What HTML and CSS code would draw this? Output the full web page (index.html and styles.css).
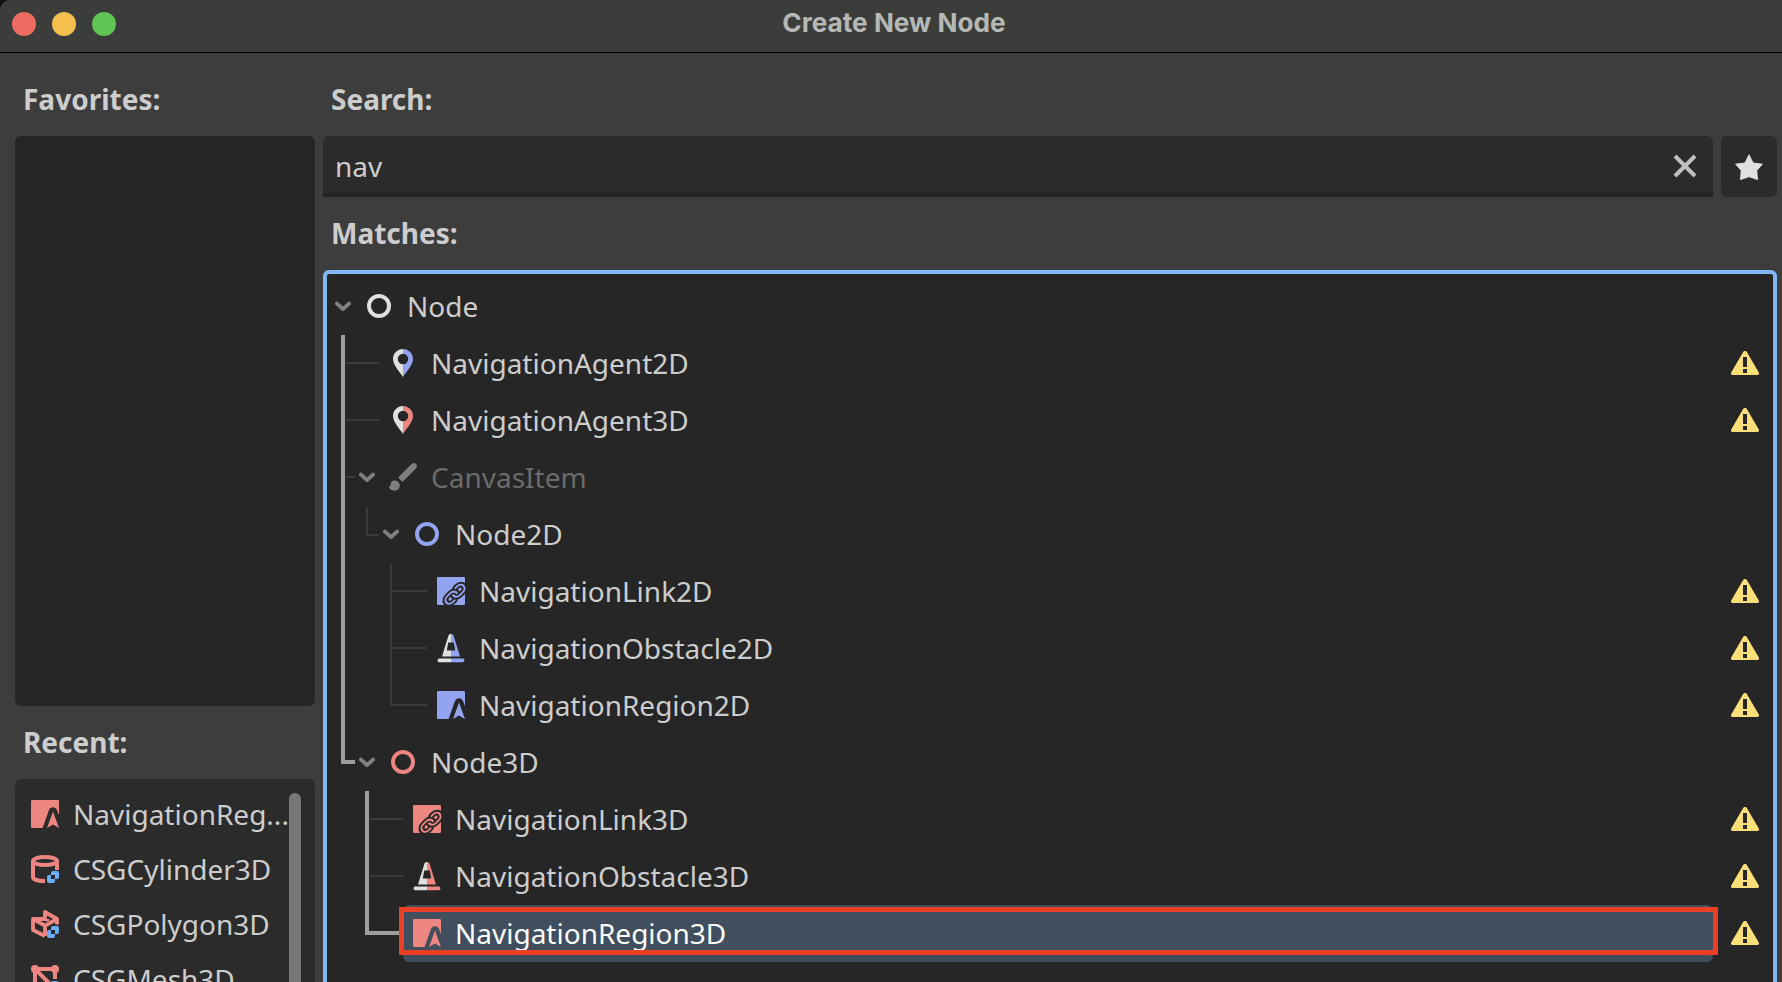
FILE: index.html
```html
<!DOCTYPE html>
<html lang="en">
<head>
<meta charset="utf-8">
<title>Create New Node</title>
<link rel="stylesheet" href="styles.css">
</head>
<body>
<svg class="sprites" aria-hidden="true">
  <symbol id="ring" viewBox="0 0 16 16"><circle cx="8" cy="8" r="5" fill="none" stroke="currentColor" stroke-width="2"/></symbol>
  <symbol id="pin" viewBox="0 0 16 16">
    <path fill="#e0e0e0" d="M8 1C5.200 1 3 3.200 3 6c0 3 3.500 6.500 5 9V8.600a2.600 2.600 0 0 1 0-5.200z"/>
    <path fill="currentColor" d="M8 1c2.800 0 5 2.200 5 5 0 3-3.500 6.500-5 9V8.600a2.600 2.600 0 0 0 0-5.200z"/>
  </symbol>
  <symbol id="brush" viewBox="0 0 16 16">
    <path fill="currentColor" d="M14.500 1.500c-.6-.6-1.500-.7-2.200 0L5.900 7.900c-.2.200-.2.500 0 .7l1.500 1.500c.2.200.5.200.7 0l6.400-6.400c.7-.7.600-1.600 0-2.200zM3.800 9.700c-1.500 0-2 1-2 2.300 0 .5-.4.700-.8.600 0 1.300 1.300 2.200 2.700 2.200 1.600 0 2.700-1.100 2.700-2.600 0-1.400-1.100-2.500-2.600-2.500z"/>
  </symbol>
  <symbol id="link" viewBox="0 0 16 16">
    <rect x="1" y="1" width="14" height="14" rx=".6" fill="currentColor"/>
    <g transform="translate(10 9.600) rotate(-45) scale(.5 .41) rotate(45) translate(-12 -12)" fill="none" stroke-linecap="round">
      <g stroke="#262626" stroke-width="6.600"><path id="chain-a" d="M10 13a5 5 0 0 0 7.540.54l3-3a5 5 0 0 0-7.070-7.070l-1.720 1.710"/><path id="chain-b" d="M14 11a5 5 0 0 0-7.540-.54l-3 3a5 5 0 0 0 7.070 7.070l1.710-1.710"/></g>
      <g stroke="currentColor" stroke-width="2.200"><use href="#chain-a"/><use href="#chain-b"/></g>
    </g>
  </symbol>
  <symbol id="cone" viewBox="0 0 16 16">
    <path fill="#e0e0e0" d="M8 1c-.7 0-1.100.3-1.300.9L3.500 12.200H8v-3H5.900l.7-4H8zM2.200 13.200a.95.95 0 0 0 0 1.900H8v-1.900z"/>
    <path fill="currentColor" d="M8 1c.7 0 1.100.3 1.300.9l3.200 10.300H8v-3h2.100l-.7-4H8zM13.800 13.200a.95.95 0 0 1 0 1.900H8v-1.900z"/>
  </symbol>
  <symbol id="region" viewBox="0 0 16 16">
    <path fill="currentColor" d="M1.600 1h12.800a.6.600 0 0 1 .6.600v7L14 6c-.7-1.800-3.300-1.800-4 0L6.800 15H1.600a.6.600 0 0 1-.6-.6V1.600a.6.600 0 0 1 .6-.6zM12 6.800 15 15l-3-1.700L9 15z"/>
  </symbol>
  <symbol id="csg" viewBox="0 0 16 16">
    <path fill="#6cacff" d="M12 9a1 1 0 0 0-1 1v1h2v2h1a1 1 0 0 0 1-1v-2a1 1 0 0 0-1-1zM11 11h-1a1 1 0 0 0-1 1v2a1 1 0 0 0 1 1h2a1 1 0 0 0 1-1v-1h-2z"/>
  </symbol>
  <symbol id="cylinder" viewBox="0 0 16 16">
    <g fill="none" stroke="currentColor" stroke-width="2"><ellipse cx="8" cy="4" rx="6" ry="2"/><path d="M14 4v4.500M2 4v8c0 1.200 2.700 2 6 2"/></g>
    <use href="#csg"/>
  </symbol>
  <symbol id="polygon" viewBox="0 0 16 16">
    <path fill="none" stroke="currentColor" stroke-width="1.900" stroke-linejoin="round" d="M8 14 2 11V5.500h6V2l6 3.500v2.800M2 5.500l6 3.300 6-3.300M8 8.800V14"/>
    <path fill="currentColor" d="M7.100 5 10.500 5.800 9.500 6.900 7.100 6.300z"/>
    <use href="#csg"/>
  </symbol>
  <symbol id="mesh" viewBox="0 0 16 16">
    <g stroke="currentColor" stroke-width="2" fill="none"><path d="M3 3h10v5M3 3v10h5M3 3l10 10"/></g>
    <g fill="currentColor"><circle cx="3" cy="3" r="2"/><circle cx="13" cy="3" r="2"/><circle cx="3" cy="13" r="2"/></g>
    <use href="#csg"/>
  </symbol>
  <symbol id="warning" viewBox="0 0 16 16">
    <path fill="#fcdf79" fill-rule="evenodd" d="M8 2c-.5 0-.8.2-1 .6L1.100 12.800c-.3.600 0 1.200.7 1.200h12.400c.7 0 1-.6.700-1.200L9 2.600C8.800 2.200 8.500 2 8 2zM7 5h2v5H7zM7 11h2v2H7z"/>
  </symbol>
  <symbol id="chevron" viewBox="0 0 16 16"><path d="M2 4.600l6 5.500 6-5.500" fill="none" stroke="#808080" stroke-width="4" stroke-linecap="round" stroke-linejoin="round"/></symbol>
</svg>

<div class="window">
  <header class="titlebar">
    <div class="lights"><i class="light red"></i><i class="light yellow"></i><i class="light green"></i></div>
    <h1 class="title">Create New Node</h1>
  </header>
  <main class="content">
    <aside class="sidebar">
      <h2 class="label">Favorites:</h2>
      <div class="favorites"></div>
      <h2 class="label recent-label">Recent:</h2>
      <div class="recent">
        <ul class="recent-list">
          <li class="recent-item three-d"><svg class="icon"><use href="#region"/></svg><span>NavigationReg...</span></li>
          <li class="recent-item three-d"><svg class="icon"><use href="#cylinder"/></svg><span>CSGCylinder3D</span></li>
          <li class="recent-item three-d"><svg class="icon"><use href="#polygon"/></svg><span>CSGPolygon3D</span></li>
          <li class="recent-item three-d"><svg class="icon"><use href="#mesh"/></svg><span>CSGMesh3D</span></li>
        </ul>
        <div class="scrollbar"></div>
      </div>
    </aside>
    <section class="results">
      <h2 class="label">Search:</h2>
      <div class="search-row">
        <div class="search"><span>nav</span><svg class="clear" viewBox="0 0 24 24"><path d="M2 2l20 20M22 2 2 22" stroke="#c0c0c0" stroke-width="4" fill="none"/></svg></div>
        <button class="favorite"><svg class="star" viewBox="0 0 28 26"><path fill="#e0e0e0" stroke="#e0e0e0" stroke-linejoin="round" d="M14 .8l4 8.200 9.300 1.200-5.500 6.200.6 9.100-8.400-2.900-8.400 2.900.6-9.100L.7 10.200 10 9z"/></svg></button>
      </div>
      <h2 class="label matches-label">Matches:</h2>
      <div class="tree">
        <svg class="guides" viewBox="0 0 120 712" fill="none">
          <g stroke="#3b3b3b" stroke-width="2"><path d="M19 89h33M19 146h33M19 203h9M40 233v28h12M64 290v141h36M64 317h36M64 374h36M43 545h33M43 602h33"/></g>
          <g stroke="#9e9e9e" stroke-width="4"><path d="M16 61v427h12M40 517v142h36"/></g>
        </svg>
        <ul class="rows">
          <li class="row level-0"><svg class="arrow"><use href="#chevron"/></svg><svg class="icon"><use href="#ring"/></svg><span class="name">Node</span></li>
          <li class="row level-1 two-d"><svg class="icon leaf"><use href="#pin"/></svg><span class="name">NavigationAgent2D</span><svg class="icon warn"><use href="#warning"/></svg></li>
          <li class="row level-1 three-d"><svg class="icon leaf"><use href="#pin"/></svg><span class="name">NavigationAgent3D</span><svg class="icon warn"><use href="#warning"/></svg></li>
          <li class="row level-1 disabled"><svg class="arrow"><use href="#chevron"/></svg><svg class="icon"><use href="#brush"/></svg><span class="name">CanvasItem</span></li>
          <li class="row level-2 two-d"><svg class="arrow"><use href="#chevron"/></svg><svg class="icon"><use href="#ring"/></svg><span class="name">Node2D</span></li>
          <li class="row level-3 two-d"><svg class="icon leaf"><use href="#link"/></svg><span class="name">NavigationLink2D</span><svg class="icon warn"><use href="#warning"/></svg></li>
          <li class="row level-3 two-d"><svg class="icon leaf"><use href="#cone"/></svg><span class="name">NavigationObstacle2D</span><svg class="icon warn"><use href="#warning"/></svg></li>
          <li class="row level-3 two-d"><svg class="icon leaf"><use href="#region"/></svg><span class="name">NavigationRegion2D</span><svg class="icon warn"><use href="#warning"/></svg></li>
          <li class="row level-1 three-d"><svg class="arrow"><use href="#chevron"/></svg><svg class="icon"><use href="#ring"/></svg><span class="name">Node3D</span></li>
          <li class="row level-2 three-d"><svg class="icon leaf"><use href="#link"/></svg><span class="name">NavigationLink3D</span><svg class="icon warn"><use href="#warning"/></svg></li>
          <li class="row level-2 three-d"><svg class="icon leaf"><use href="#cone"/></svg><span class="name">NavigationObstacle3D</span><svg class="icon warn"><use href="#warning"/></svg></li>
          <li class="row level-2 three-d selected"><svg class="icon leaf"><use href="#region"/></svg><span class="name">NavigationRegion3D</span><svg class="icon warn"><use href="#warning"/></svg></li>
        </ul>
        <div class="highlight"></div>
      </div>
    </section>
  </main>
</div>
</body>
</html>
```
FILE: styles.css
```css
* { box-sizing: border-box; }
html, body { margin: 0; height: 100%; overflow: hidden; background: #101010; }
body { font-family: "Noto Sans", "Open Sans", sans-serif; font-size: 28px; color: #cdcdcd; }
ul { list-style: none; margin: 0; padding: 0; }
.sprites { display: none; }

.window { display: flex; flex-direction: column; height: 982px; background: #3d3d3d; border-top-left-radius: 10px; overflow: hidden; }
.titlebar { display: grid; grid-template-columns: 1fr auto 1fr; flex: none; height: 53px; background: #3b3d3b; border-bottom: 1px solid #000; }
.lights { display: flex; gap: 16px; padding: 12px 0 0 12px; }
.light { width: 24px; height: 24px; border-radius: 50%; }
.red { background: #ed6b60; }
.yellow { background: #f5bf4f; }
.green { background: #62c655; }
.title { margin: 0; padding: 8px 0 0 6px; font: 700 26.2px/30px Inter, sans-serif; color: #b6b8b6; }

.content { display: grid; grid-template-columns: 300px 1454px; gap: 8px; flex: 1; min-height: 0; padding: 23px 0 0 15px; }
.sidebar, .results { display: flex; flex-direction: column; min-height: 0; }
.label { flex: none; margin: 0; height: 60px; padding: 3px 0 0 8px; font-size: 28px; line-height: 40px; font-weight: 700; }
.favorites { flex: none; height: 570px; border-radius: 6px; background: #262626; }
.recent-label { height: 73px; padding-top: 16px; }
.recent { display: flex; flex: 1; min-height: 0; overflow: hidden; border-radius: 6px 6px 0 0; background: #2b2b2b; padding: 7px 14px 0; }
.recent-list { flex: 1; min-width: 0; }
.recent-item { display: flex; align-items: center; gap: 12px; height: 55px; white-space: nowrap; }
.recent-item span { color: #cdcdcd; margin-right: -20px; }
.scrollbar { flex: none; width: 12px; height: 300px; margin-top: 7px; border-radius: 6px; background: #787878; }

.search-row { display: flex; gap: 8px; flex: none; height: 61px; }
.search { display: flex; align-items: center; justify-content: space-between; flex: 1; padding: 0 16px 0 12px; border-bottom: 4px solid #242424; border-radius: 6px 6px 0 0; background: #2b2b2b; }
.search span { padding-top: 2px; }
.clear { width: 24px; height: 24px; margin-top: 2px; }
.favorite { display: flex; align-items: center; justify-content: center; width: 56px; border: 0; border-radius: 6px; background: #2b2b2b; padding: 0; }
.star { width: 28px; height: 26px; }
.matches-label { height: 73px; padding-top: 16px; }

.tree { position: relative; flex: none; height: 720px; border: 4px solid #82b8f7; border-radius: 6px; background: #262626; padding: 4px 12px 0 8px; }
.guides { position: absolute; left: 0; top: 0; width: 120px; height: 712px; }
.row { display: flex; align-items: center; height: 57px; padding-bottom: 1px; color: #e0e0e0; }
.level-1 { padding-left: 24px; }
.level-2 { padding-left: 48px; }
.level-3 { padding-left: 72px; }
.two-d { color: #92a4ef; }
.three-d { color: #ed8581; }
.icon { flex: none; width: 32px; height: 32px; }
.arrow { flex: none; width: 16px; height: 16px; margin: 1px 12px 0 0; }
.leaf { margin-left: 28px; }
.name { margin-left: 12px; color: #cdcdcd; line-height: 40px; }
.disabled { color: #808080; }
.disabled .name { color: #6b6b6b; }
.warn { margin-left: auto; }
.selected { position: relative; z-index: 0; }
.selected::before { content: ""; position: absolute; z-index: -1; inset: 0 48px 0 68px; border-radius: 6px; background: #404e5d; }
.selected .name { color: #fff; }
.highlight { position: absolute; z-index: 1; left: 72px; top: 633px; width: 1319px; height: 48px; border: 5px solid #eb4026; }
```
